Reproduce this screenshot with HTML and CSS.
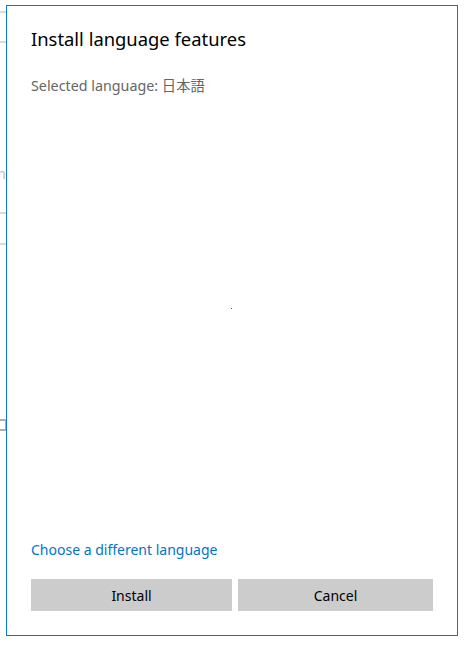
FILE: index.html
```html
<!DOCTYPE html>
<html>
<head>
<meta charset="utf-8">
<link rel="stylesheet" href="styles.css">
</head>
<body>
<div class="backdrop">
  <div class="strip">
    <div class="bg-row r1"></div>
    <div class="bg-line"></div>
    <div class="bg-row r2"></div>
    <div class="bg-line"></div>
    <div class="bg-text t1">Lan</div>
    <div class="bg-row r3"></div>
    <div class="bg-line"></div>
    <div class="bg-row r4"></div>
    <div class="bg-line"></div>
    <div class="bg-row r5"></div>
    <div class="bg-text t2">Ali</div>
    <div class="bg-row r6"></div>
    <div class="bg-icon"></div>
  </div>
</div>
<div class="dialog">
  <h1 class="title">Install language features</h1>
  <p class="selected">Selected language: 日本語</p>
  <div class="body"><span class="dot"></span></div>
  <a class="link" href="#">Choose a different language</a>
  <div class="buttons">
    <button class="btn">Install</button>
    <button class="btn">Cancel</button>
  </div>
</div>
</body>
</html>
```
FILE: styles.css
```css
* { box-sizing: border-box; }
html, body { margin: 0; padding: 0; background: #fff; }
body {
  width: 466px;
  height: 646px;
  position: relative;
  overflow: hidden;
  font-family: "Noto Sans", "Noto Sans CJK JP", sans-serif;
}
.backdrop { display: flex; height: 646px; }
.strip {
  width: 7px;
  overflow: hidden;
  display: flex;
  flex-direction: column;
}
.bg-row { flex: none; }
.bg-row.r1 { height: 11px; }
.bg-line { height: 2px; background: #d9d9d9; flex: none; width: 7px; }
.bg-row.r2 { height: 28px; }
.bg-row.r3 { height: 28px; }
.bg-row.r4 { height: 29px; }
.bg-row.r5 { height: 56px; }
.bg-row.r6 { height: 98px; }
.bg-text {
  flex: none;
  font-size: 14px;
  line-height: 20px;
  color: #bdbdbd;
  white-space: nowrap;
  margin-left: -18px;
}
.bg-text.t1 { margin-top: 121px; }
.bg-icon {
  flex: none;
  width: 14px;
  height: 12px;
  border: 2px solid #b0b0b0;
  margin-left: -7px;
}
.dialog {
  position: absolute;
  left: 6px;
  top: 5px;
  width: 452px;
  height: 631px;
  border: 1px solid #0a78d4;
  border-right-color: #1a6fbf;
  border-bottom-color: #1a6fbf;
  background: #fff;
  padding: 19px 24px 24px;
  display: flex;
  flex-direction: column;
}
.title {
  margin: 0;
  font-weight: 400;
  font-size: 18.4px;
  line-height: 28px;
  color: #000;
}
.selected {
  margin: 23px 0 0;
  font-size: 14.3px;
  line-height: 20px;
  color: #666;
}
.body { flex: 1; position: relative; }
.dot {
  position: absolute;
  left: 200px;
  top: 212px;
  width: 1px;
  height: 1px;
  background: #555;
}
.link {
  font-size: 14px;
  line-height: 20px;
  color: #0074cc;
  text-decoration: none;
  align-self: flex-start;
}
.buttons {
  margin-top: 19px;
  display: grid;
  grid-template-columns: 201px 1fr;
  gap: 6px;
}
.btn {
  height: 32px;
  border: none;
  background: #cccccc;
  font-family: "Noto Sans", sans-serif;
  font-size: 14px;
  color: #000;
  padding: 0;
}
```
